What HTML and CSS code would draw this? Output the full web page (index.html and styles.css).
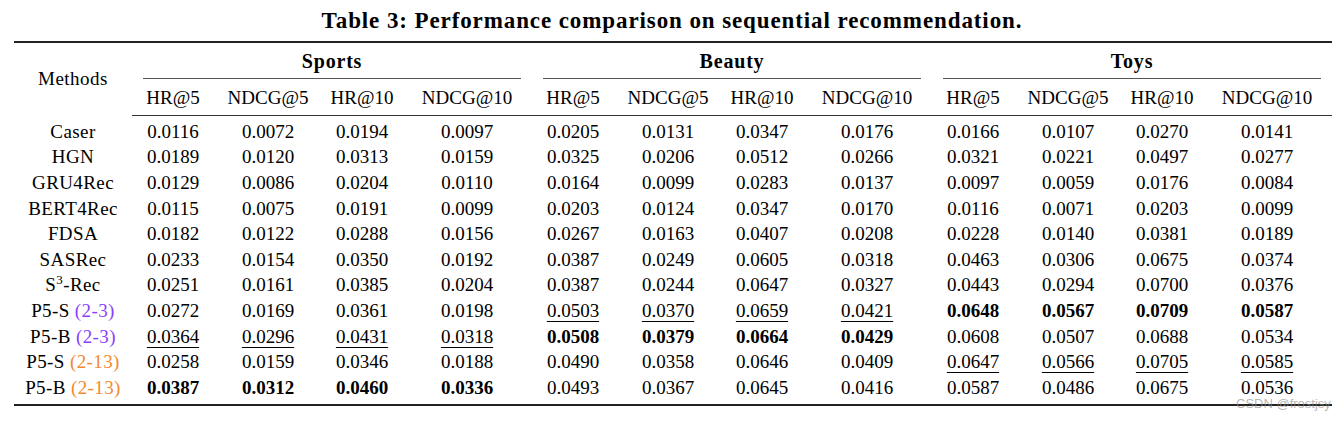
FILE: index.html
```html
<!DOCTYPE html>
<html lang="en">
<head>
<meta charset="utf-8">
<title>Table 3</title>
<link rel="stylesheet" href="styles.css">
</head>
<body>
<div class="page">
  <h1 class="caption">Table 3: Performance comparison on sequential recommendation.</h1>
  <table class="results">
    <colgroup>
      <col class="c-method">
      <col class="c-a"><col class="c-b"><col class="c-c"><col class="c-d">
      <col class="c-a"><col class="c-b"><col class="c-c"><col class="c-d">
      <col class="c-a"><col class="c-b"><col class="c-c"><col class="c-d">
    </colgroup>
    <thead>
      <tr class="group-row">
        <th class="method-head" rowspan="2">Methods</th>
        <th class="group" colspan="4"><div class="group-label">Sports</div></th>
        <th class="group" colspan="4"><div class="group-label">Beauty</div></th>
        <th class="group" colspan="4"><div class="group-label">Toys</div></th>
      </tr>
      <tr class="metric-row">
        <th>HR@5</th><th>NDCG@5</th><th>HR@10</th><th>NDCG@10</th>
        <th>HR@5</th><th>NDCG@5</th><th>HR@10</th><th>NDCG@10</th>
        <th>HR@5</th><th>NDCG@5</th><th>HR@10</th><th>NDCG@10</th>
      </tr>
    </thead>
    <tbody>
      <tr class="first">
        <td class="method">Caser</td>
        <td>0.0116</td><td>0.0072</td><td>0.0194</td><td>0.0097</td>
        <td>0.0205</td><td>0.0131</td><td>0.0347</td><td>0.0176</td>
        <td>0.0166</td><td>0.0107</td><td>0.0270</td><td>0.0141</td>
      </tr>
      <tr>
        <td class="method">HGN</td>
        <td>0.0189</td><td>0.0120</td><td>0.0313</td><td>0.0159</td>
        <td>0.0325</td><td>0.0206</td><td>0.0512</td><td>0.0266</td>
        <td>0.0321</td><td>0.0221</td><td>0.0497</td><td>0.0277</td>
      </tr>
      <tr>
        <td class="method">GRU4Rec</td>
        <td>0.0129</td><td>0.0086</td><td>0.0204</td><td>0.0110</td>
        <td>0.0164</td><td>0.0099</td><td>0.0283</td><td>0.0137</td>
        <td>0.0097</td><td>0.0059</td><td>0.0176</td><td>0.0084</td>
      </tr>
      <tr>
        <td class="method">BERT4Rec</td>
        <td>0.0115</td><td>0.0075</td><td>0.0191</td><td>0.0099</td>
        <td>0.0203</td><td>0.0124</td><td>0.0347</td><td>0.0170</td>
        <td>0.0116</td><td>0.0071</td><td>0.0203</td><td>0.0099</td>
      </tr>
      <tr>
        <td class="method">FDSA</td>
        <td>0.0182</td><td>0.0122</td><td>0.0288</td><td>0.0156</td>
        <td>0.0267</td><td>0.0163</td><td>0.0407</td><td>0.0208</td>
        <td>0.0228</td><td>0.0140</td><td>0.0381</td><td>0.0189</td>
      </tr>
      <tr>
        <td class="method">SASRec</td>
        <td>0.0233</td><td>0.0154</td><td>0.0350</td><td>0.0192</td>
        <td>0.0387</td><td>0.0249</td><td>0.0605</td><td>0.0318</td>
        <td>0.0463</td><td>0.0306</td><td>0.0675</td><td>0.0374</td>
      </tr>
      <tr>
        <td class="method">S<sup class="sup">3</sup>-Rec</td>
        <td>0.0251</td><td>0.0161</td><td>0.0385</td><td>0.0204</td>
        <td>0.0387</td><td>0.0244</td><td>0.0647</td><td>0.0327</td>
        <td>0.0443</td><td>0.0294</td><td>0.0700</td><td>0.0376</td>
      </tr>
      <tr>
        <td class="method">P5-S <span class="tag-purple">(2-3)</span></td>
        <td>0.0272</td><td>0.0169</td><td>0.0361</td><td>0.0198</td>
        <td><span class="second">0.0503</span></td><td><span class="second">0.0370</span></td><td><span class="second">0.0659</span></td><td><span class="second">0.0421</span></td>
        <td class="best">0.0648</td><td class="best">0.0567</td><td class="best">0.0709</td><td class="best">0.0587</td>
      </tr>
      <tr>
        <td class="method">P5-B <span class="tag-purple">(2-3)</span></td>
        <td><span class="second">0.0364</span></td><td><span class="second">0.0296</span></td><td><span class="second">0.0431</span></td><td><span class="second">0.0318</span></td>
        <td class="best">0.0508</td><td class="best">0.0379</td><td class="best">0.0664</td><td class="best">0.0429</td>
        <td>0.0608</td><td>0.0507</td><td>0.0688</td><td>0.0534</td>
      </tr>
      <tr>
        <td class="method">P5-S <span class="tag-orange">(2-13)</span></td>
        <td>0.0258</td><td>0.0159</td><td>0.0346</td><td>0.0188</td>
        <td>0.0490</td><td>0.0358</td><td>0.0646</td><td>0.0409</td>
        <td><span class="second">0.0647</span></td><td><span class="second">0.0566</span></td><td><span class="second">0.0705</span></td><td><span class="second">0.0585</span></td>
      </tr>
      <tr class="last">
        <td class="method">P5-B <span class="tag-orange">(2-13)</span></td>
        <td class="best">0.0387</td><td class="best">0.0312</td><td class="best">0.0460</td><td class="best">0.0336</td>
        <td>0.0493</td><td>0.0367</td><td>0.0645</td><td>0.0416</td>
        <td>0.0587</td><td>0.0486</td><td>0.0675</td><td>0.0536</td>
      </tr>
    </tbody>
  </table>
  <div class="watermark">CSDN @frostjsy</div>
</div>
</body>
</html>
```

FILE: styles.css
```css
html, body {
  margin: 0;
  padding: 0;
  background: #ffffff;
}

.page {
  position: relative;
  width: 1344px;
  height: 422px;
  font-family: "Liberation Serif", "Times New Roman", serif;
  color: #000000;
}

.caption {
  margin: 0;
  padding-top: 9px;
  height: 41px;
  box-sizing: border-box;
  font-size: 23px;
  line-height: 24px;
  letter-spacing: 0.9px;
  font-weight: bold;
  text-align: center;
}

.results {
  margin-left: 14px;
  width: 1318px;
  table-layout: fixed;
  border-collapse: collapse;
  border-top: 2px solid #222222;
  border-bottom: 2px solid #222222;
  font-size: 19px;
}

.c-method { width: 118px; }
.c-a { width: 82px; }
.c-b { width: 108px; }
.c-c { width: 80px; }
.c-d { width: 130px; }

.results th,
.results td {
  padding: 0;
  text-align: center;
  white-space: nowrap;
}

.results th {
  font-weight: normal;
}

.group-row th.group {
  height: 36px;
  padding: 0 11px;
  vertical-align: bottom;
}

.group-label {
  font-weight: bold;
  font-size: 20px;
  letter-spacing: 0.8px;
  line-height: 24px;
  padding-bottom: 5px;
  border-bottom: 1px solid #555555;
}

.method-head {
  vertical-align: middle;
  padding-top: 2px;
  letter-spacing: 0.5px;
}

.metric-row th {
  height: 35px;
  line-height: 24px;
  vertical-align: middle;
  padding-top: 1px;
  border-bottom: 1px solid #333333;
}

.results tbody td {
  height: 25.6px;
  line-height: 24px;
  vertical-align: middle;
}

.results tbody td.method {
  letter-spacing: 0.4px;
}

.results tbody tr.first td {
  padding-top: 3px;
}

.results tbody tr.last td {
  padding-bottom: 3px;
}

.sup {
  font-size: 13px;
  line-height: 0;
  vertical-align: 7px;
}

.tag-purple { color: #8a3ffc; }
.tag-orange { color: #f28a30; }

.best { font-weight: bold; }

.second {
  text-decoration: underline;
  text-decoration-thickness: 1px;
  text-underline-offset: 4px;
}

.watermark {
  position: absolute;
  left: 1236px;
  top: 396px;
  font-family: "Liberation Sans", Arial, sans-serif;
  font-size: 13px;
  line-height: 15px;
  color: rgba(140, 140, 140, 0.65);
}
```
